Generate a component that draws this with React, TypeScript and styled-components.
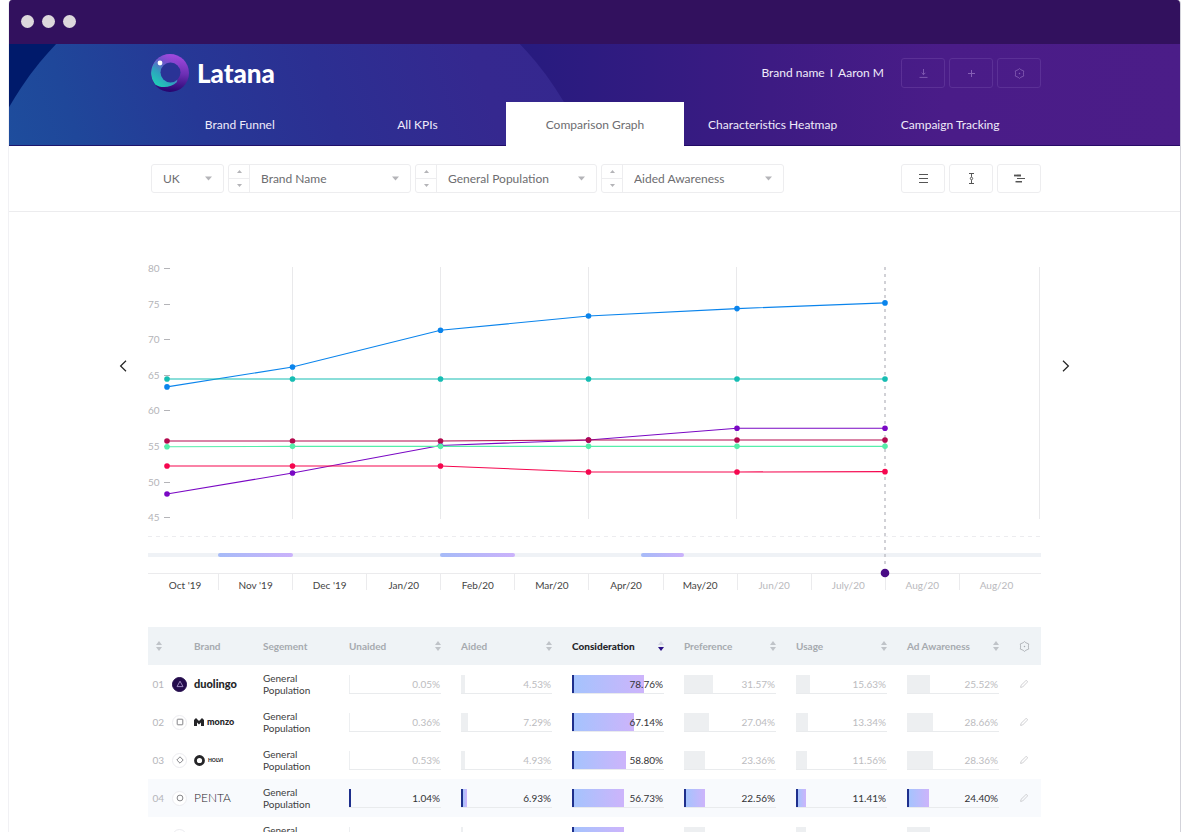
import React from "react";
import styled, { createGlobalStyle, css } from "styled-components";

const GlobalStyle = createGlobalStyle`
  *, *::before, *::after { box-sizing: border-box; }
  body {
    margin: 0;
    background: #fff;
    color: #3a3a3c;
    font-family: Lato, "Liberation Sans", sans-serif;
    font-size: 12px;
  }
  button, select { font: inherit; color: inherit; }
`;

const Window = styled.div`
  margin: 0 19px 0 8px;
  min-height: 100vh;
  border-left: 1px solid #f1f1f4;
  border-right: 1px solid #d3d3da;
  border-radius: 4px 4px 0 0;
  overflow: hidden;
  background: #fff;
`;

const TitleBar = styled.div`
  display: flex;
  align-items: center;
  gap: 8px;
  height: 44px;
  padding: 0 12px 2px;
  background: #32115e;
`;

const WindowDot = styled.span`
  width: 13px;
  height: 13px;
  border-radius: 50%;
  background: #dcd8dc;
`;

const Header = styled.header`
  position: relative;
  overflow: hidden;
  background: linear-gradient(90deg, #001a6b 0, #001a6b 5%, #281b7f 45%, #3d1b83 65%, #4a1c88 80%, #4b1d88 100%);

  &::before {
    content: "";
    position: absolute;
    left: -42px;
    top: -99px;
    width: 642px;
    height: 642px;
    border-radius: 50%;
    background: linear-gradient(72deg, #1d529f 0, #1f479a 18%, #263896 36%, #2c2f92 55%, #35288f 78%, #35278e 100%);
    background-size: 642px 202px;
    background-position: 0 44px;
    background-repeat: no-repeat;
  }

  &::after {
    content: "";
    position: absolute;
    left: 0;
    right: 0;
    bottom: 0;
    height: 1px;
    background: rgba(28, 4, 92, 0.75);
  }
`;

const Container = styled.div`
  position: relative;
  z-index: 1;
  width: 100%;
  max-width: 893px;
  margin: 0 auto;
`;

const Masthead = styled.div`
  display: flex;
  align-items: center;
  height: 58px;
  padding-left: 3px;
`;

const Brand = styled.a`
  display: flex;
  align-items: center;
  gap: 8px;
  color: #fff;
  font-size: 26px;
  font-weight: 900;
  line-height: 28px;
  text-decoration: none;
`;

const Account = styled.div`
  display: flex;
  gap: 5px;
  margin-left: auto;
  margin-right: 17px;
  color: #f0ebfa;
  line-height: 16px;
`;

const ButtonGroup = styled.div`
  display: flex;
  gap: 4px;
`;

const IconButton = styled.button<{ $dark?: boolean }>`
  display: flex;
  align-items: center;
  justify-content: center;
  width: 44px;
  height: ${(p) => (p.$dark ? 30 : 29)}px;
  padding: 0;
  border: 1px solid ${(p) => (p.$dark ? "#5b3096" : "#ededef")};
  border-radius: 3px;
  background: transparent;
  color: ${(p) => (p.$dark ? "#855fb5" : "#555")};
`;

const Tabs = styled.nav`
  display: grid;
  grid-template-columns: repeat(5, 1fr);
  padding: 0 2px 0 3px;
`;

const Tab = styled.a<{ $active?: boolean }>`
  display: flex;
  align-items: center;
  justify-content: center;
  height: 44px;
  color: ${(p) => (p.$active ? "#6d6d70" : "#f0ebfa")};
  background: ${(p) => (p.$active ? "#fff" : "transparent")};
  text-decoration: none;
  white-space: nowrap;
`;

const Toolbar = styled.div`
  border-bottom: 1px solid #ececee;
`;

const ToolbarRow = styled(Container)`
  display: flex;
  align-items: center;
  gap: 4px;
  height: 65px;
  padding-left: 3px;

  & > ${ButtonGroup} { margin-left: auto; }
`;

const Filter = styled.div<{ $width: number }>`
  display: flex;
  width: ${(p) => p.$width}px;
  height: 29px;
  border: 1px solid #ededef;
  border-radius: 3px;
`;

const Stepper = styled.div`
  display: flex;
  flex-direction: column;
  flex: none;
  width: 21px;
  border-right: 1px solid #ededef;
`;

const StepButton = styled.button`
  display: flex;
  flex: 1;
  align-items: center;
  justify-content: center;
  padding: 0;
  border: 0;
  background: none;
  color: #b4b4b8;

  & + & { border-top: 1px solid #ededef; }
`;

const SelectWrap = styled.label`
  position: relative;
  display: flex;
  flex: 1;
  align-items: center;
  color: #b4b4b8;

  svg { position: absolute; right: 11px; pointer-events: none; }
`;

const Select = styled.select`
  width: 100%;
  height: 100%;
  padding: 0 24px 1px 11px;
  border: 0;
  appearance: none;
  background: transparent;
  color: #6d6d70;
`;

const ChartRow = styled.section`
  display: flex;
  width: 100%;
  max-width: 951px;
  gap: 21px;
  margin: 0 auto;
  padding-top: 48px;
`;

const PageButton = styled.button`
  flex: none;
  align-self: flex-start;
  width: 8px;
  height: 14px;
  margin-top: 99px;
  padding: 0;
  border: 0;
  background: none;
  color: #222;
`;

const Chart = styled.div`
  flex: 1;
  min-width: 0;
`;

const Plot = styled.svg`
  display: block;
  position: relative;
  z-index: 1;
  width: 100%;
  height: auto;
  overflow: visible;
`;

const Months = styled.ol`
  display: grid;
  grid-template-columns: 70fr repeat(10, 74fr) 82fr;
  margin: -5px 0 0;
  padding: 0;
  list-style: none;
`;

const Month = styled.li<{ $future: boolean }>`
  height: 17px;
  padding-top: 5px;
  border-left: 1px solid #ebebed;
  color: ${(p) => (p.$future ? "#b9b9bd" : "#444")};
  font-size: 10px;
  line-height: 14px;
  text-align: center;

  &:first-child { padding-left: 3px; border-left-color: transparent; }
  &:last-child { padding-right: 8px; }
`;

const TableWrap = styled(Container)`
  margin-top: 37px;
`;

const Table = styled.table`
  width: 100%;
  table-layout: fixed;
  border-collapse: collapse;
  font-size: 10px;

  th, td { padding: 0; text-align: left; }
  th { height: 38px; background: #eff3f6; color: #a6aaaf; font-weight: 700; }
  td { height: 38px; }
`;

const HeadCell = styled.div<{ $sorted?: boolean }>`
  display: flex;
  align-items: center;
  justify-content: space-between;
  padding-right: 20px;
  color: ${(p) => (p.$sorted ? "#26262a" : "inherit")};
  font-weight: ${(p) => (p.$sorted ? 900 : 700)};
`;

const SortButton = styled.button`
  display: flex;
  padding: 0;
  border: 0;
  background: none;
`;

const RankHead = styled.div`
  display: flex;
  padding-left: 8px;
`;

const Row = styled.tr<{ $active?: boolean }>`
  background: ${(p) => (p.$active ? "#f8fafd" : "transparent")};
`;

const Rank = styled.div`
  display: flex;
  align-items: center;
  justify-content: flex-end;
  gap: 8px;
  padding-right: 7px;
  color: #b5b5ba;
`;

const Badge = styled.span<{ $filled?: boolean }>`
  display: flex;
  align-items: center;
  justify-content: center;
  width: 15px;
  height: 15px;
  border: 1px solid ${(p) => (p.$filled ? "#240c4c" : "#ececf0")};
  border-radius: 50%;
  background: ${(p) => (p.$filled ? "#240c4c" : "#fff")};
  color: ${(p) => (p.$filled ? "#a895c8" : "#77777c")};
`;

const BrandMark = styled.span<{ $size: number; $weight: number }>`
  display: flex;
  align-items: center;
  gap: 3px;
  color: #252528;
  font-size: ${(p) => p.$size}px;
  font-weight: ${(p) => p.$weight};
  line-height: 14px;
`;

const Segment = styled.div`
  width: 60px;
  color: #3d3d40;
  line-height: 12px;
`;

const Meter = styled.div<{ $on: boolean }>`
  display: flex;
  position: relative;
  height: 19px;
  margin-right: 20px;
  border-bottom: 1px solid #e9ebed;
  color: ${(p) => (p.$on ? "#333336" : "#bcbcc0")};
`;

const MeterBar = styled.span<{ $on: boolean }>`
  min-width: 1px;
  background: #edeff1;
  ${(p) =>
    p.$on &&
    css`
      min-width: 2px;
      border-left: 2px solid #1e2f8c;
      background: linear-gradient(90deg, #a5c3fd, #cdb4fb);
    `}
`;

const MeterValue = styled.span`
  position: absolute;
  right: 1px;
  top: 2px;
  line-height: 14px;
`;

const EditButton = styled.button`
  display: flex;
  margin-left: 1px;
  padding: 0;
  border: 0;
  background: none;
  color: #c4c4c8;
`;

const Caret = ({ up, size = 7 }: { up?: boolean; size?: number }) => (
  <svg width={size} height={size === 7 ? 5 : 3} viewBox="0 0 7 4" fill="currentColor" aria-hidden="true">
    <path d={up ? "M0 4 3.5 0 7 4z" : "M0 0h7L3.5 4z"} />
  </svg>
);

const SortIcon = ({ active }: { active?: boolean }) => (
  <svg width="6" height="10" viewBox="0 0 6 10" aria-hidden="true">
    <path d="M0 4 3 0l3 4z" fill={active ? "#d3d5e2" : "#bfc3c8"} />
    <path d="M0 6h6L3 10z" fill={active ? "#2a0f86" : "#bfc3c8"} />
  </svg>
);

const GearIcon = () => (
  <svg width="11" height="11" viewBox="0 0 12 12" fill="none" stroke="currentColor" aria-hidden="true">
    <path
      d="M6 .6 7.5 1.9 10.6 3.2 10.3 5.2 10.3 6.8 10.6 8.8 7.5 10.1 6 11.4 4.5 10.1 1.4 8.8 1.7 6.8 1.7 5.2 1.4 3.2 4.5 1.9z"
      strokeWidth=".9"
      strokeLinejoin="round"
    />
    <circle cx="6" cy="6" r=".8" fill="currentColor" stroke="none" />
  </svg>
);

const LogoIcon = () => (
  <svg width="38" height="38" viewBox="0 0 38 38" aria-hidden="true">
    <defs>
      <linearGradient id="ringPurple" x1=".6" y1="0" x2=".5" y2="1">
        <stop offset="0" stopColor="#a24be0" />
        <stop offset=".5" stopColor="#6c2fb4" />
        <stop offset="1" stopColor="#25036d" />
      </linearGradient>
      <linearGradient id="ringTeal" gradientUnits="userSpaceOnUse" x1="4" y1="30" x2="24" y2="4">
        <stop offset="0" stopColor="#1fcdb6" />
        <stop offset=".35" stopColor="#2fa0bf" />
        <stop offset=".7" stopColor="#6d55cb" stopOpacity=".9" />
        <stop offset="1" stopColor="#9a4bdc" stopOpacity="0" />
      </linearGradient>
    </defs>
    <circle cx="19" cy="19" r="19" fill="url(#ringPurple)" />
    <path d="M19 0A19 19 0 0 0 4 30.500C10 34.500 20 34 26 28L30 0z" fill="url(#ringTeal)" clipPath="circle(19px at 19px 19px)" />
    <circle cx="19.5" cy="18.5" r="10" fill="#2a3396" />
    <circle cx="9" cy="9" r="2.4" fill="#fff" />
  </svg>
);

const shapes: Record<string, React.ReactNode> = {
  triangle: <path d="M4 1.2 7 6.6H1z" />,
  square: <rect x="1.2" y="1.2" width="5.6" height="5.6" rx=".6" />,
  diamond: <path d="M4 .8 7.2 4 4 7.2.8 4z" />,
  circle: <circle cx="4" cy="4" r="2.9" />,
};

const ShapeIcon = ({ kind }: { kind: string }) => (
  <svg width="8" height="8" viewBox="0 0 8 8" fill="none" stroke="currentColor" strokeWidth=".9" strokeLinejoin="round" aria-hidden="true">
    {shapes[kind]}
  </svg>
);

const tabs = ["Brand Funnel", "All KPIs", "Comparison Graph", "Characteristics Heatmap", "Campaign Tracking"];

const filters = [
  { label: "Country", value: "UK", width: 73 },
  { label: "Brand", value: "Brand Name", width: 183, stepper: true },
  { label: "Segment", value: "General Population", width: 182, stepper: true },
  { label: "KPI", value: "Aided Awareness", width: 183, stepper: true },
];

const months = ["Oct '19", "Nov '19", "Dec '19", "Jan/20", "Feb/20", "Mar/20", "Apr/20", "May/20", "Jun/20", "July/20", "Aug/20", "Aug/20"];

const pointX = [19, 144.5, 292.5, 440.5, 589, 737];
const valueY = (v: number) => 8 + (80 - v) * 7.12;

const series = [
  { color: "#7a08c4", values: [48.26, 51.2, 55.07, 55.85, 57.5, 57.5] },
  { color: "#f5074f", values: [52.2, 52.2, 52.2, 51.35, 51.35, 51.4] },
  { color: "#b30a4e", values: [55.7, 55.7, 55.7, 55.85, 55.85, 55.85] },
  { color: "#56eeaa", values: [54.9, 54.95, 54.95, 54.95, 54.95, 54.95] },
  { color: "#0a84ec", values: [63.3, 66.1, 71.25, 73.26, 74.3, 75.1] },
  { color: "#16bdb3", values: [64.4, 64.4, 64.4, 64.4, 64.4, 64.4] },
];

const campaigns = [
  { x: 70, width: 75 },
  { x: 292, width: 75 },
  { x: 493, width: 43 },
];

const metrics = ["Unaided", "Aided", "Consideration", "Preference", "Usage", "Ad Awareness"];
const columnWidths = [46, 69, 86, 112, 111, 112, 112, 111, 112];
const sortedMetric = 2;

const MonzoLogo = () => (
  <BrandMark $size={9} $weight={900}>
    <svg width="10" height="8" viewBox="0 0 10 8" fill="currentColor" aria-hidden="true">
      <path d="M0 2 2 0l3 3 3-3 2 2v6H7V4.6L5 6.6 3 4.6V8H0z" />
    </svg>
    monzo
  </BrandMark>
);

const HolviLogo = () => (
  <BrandMark $size={5} $weight={900}>
    <svg width="11" height="11" viewBox="0 0 11 11" fill="none" stroke="currentColor" strokeWidth="2.8" aria-hidden="true">
      <circle cx="5.5" cy="5.500" r="4" />
    </svg>
    HOLVI
  </BrandMark>
);

const brands = [
  { shape: "triangle", filled: true, logo: <BrandMark $size={11} $weight={900}>duolingo</BrandMark>, values: [0.05, 4.53, 78.76, 31.57, 15.63, 25.52] },
  { shape: "square", logo: <MonzoLogo />, values: [0.36, 7.29, 67.14, 27.04, 13.34, 28.66] },
  { shape: "diamond", logo: <HolviLogo />, values: [0.53, 4.93, 58.8, 23.36, 11.56, 28.36] },
  { shape: "circle", active: true, logo: <BrandMark $size={12} $weight={300}>PENTA</BrandMark>, values: [1.04, 6.93, 56.73, 22.56, 11.41, 24.4] },
  { shape: "circle", logo: <BrandMark $size={11} $weight={900}>N26</BrandMark>, values: [0.31, 2.1, 56.4, 22.4, 10.9, 24.6] },
];

const ComparisonPlot = () => (
  <Plot viewBox="0 0 893 318" role="img" aria-label="Aided awareness by month">
    <defs>
      <linearGradient id="campaign">
        <stop offset="0" stopColor="#a6bbf8" />
        <stop offset="1" stopColor="#cbb2fb" />
      </linearGradient>
    </defs>
    {[144.5, 292.5, 440.5, 588.5, 891.5].map((x) => (
      <line key={x} x1={x} x2={x} y1="7" y2="259" stroke="#e9e9eb" />
    ))}
    {[80, 75, 70, 65, 60, 55, 50, 45].map((v) => (
      <g key={v}>
        <text x="0" y={Math.round(valueY(v)) + 4} fontSize="10" fill="#b4b4b8">{v}</text>
        <line x1="16" x2="22" y1={Math.round(valueY(v)) + 0.5} y2={Math.round(valueY(v)) + 0.5} stroke="#b4b4b8" />
      </g>
    ))}
    <line x1="0" x2="893" y1="276.5" y2="276.5" stroke="#ececef" strokeDasharray="4 4" />
    <rect x="0" y="293" width="893" height="4" fill="#eff2f6" />
    {campaigns.map((c) => (
      <rect key={c.x} x={c.x} y="293" width={c.width} height="4" rx="2" fill="url(#campaign)" />
    ))}
    <line x1="0" x2="893" y1="313.5" y2="313.5" stroke="#ebebed" />
    <line x1="737" x2="737" y1="7" y2="308" stroke="#b9b9c0" strokeWidth="1.3" strokeDasharray="3 4" />
    {series.map((s) => (
      <g key={s.color} fill={s.color}>
        <polyline
          points={s.values.map((v, i) => `${pointX[i]},${valueY(v)}`).join(" ")}
          fill="none"
          stroke={s.color}
          strokeWidth="1.1"
        />
        {s.values.map((v, i) => (
          <circle key={i} cx={pointX[i]} cy={valueY(v)} r="2.8" />
        ))}
      </g>
    ))}
    <circle cx="737" cy="313" r="4.3" fill="#4a0c86" />
  </Plot>
);

export default function App() {
  return (
    <>
      <GlobalStyle />
      <Window>
        <TitleBar>
          <WindowDot />
          <WindowDot />
          <WindowDot />
        </TitleBar>

        <Header>
          <Container>
            <Masthead>
              <Brand href="#">
                <LogoIcon />
                Latana
              </Brand>
              <Account>
                <span>Brand name</span>
                <span>I</span>
                <span>Aaron M</span>
              </Account>
              <ButtonGroup>
                <IconButton $dark aria-label="Download">
                  <svg width="9" height="9" viewBox="0 0 9 9" fill="none" stroke="currentColor" strokeWidth=".9">
                    <path d="M4.5 0v5.6M2.6 3.8l1.9 1.9 1.9-1.9M.5 8.4h8" />
                  </svg>
                </IconButton>
                <IconButton $dark aria-label="Add">
                  <svg width="7" height="7" viewBox="0 0 7 7" fill="none" stroke="currentColor">
                    <path d="M3.5 0v7M0 3.5h7" />
                  </svg>
                </IconButton>
                <IconButton $dark aria-label="Settings">
                  <GearIcon />
                </IconButton>
              </ButtonGroup>
            </Masthead>
            <Tabs>
              {tabs.map((tab) => (
                <Tab key={tab} href="#" $active={tab === "Comparison Graph"}>
                  {tab}
                </Tab>
              ))}
            </Tabs>
          </Container>
        </Header>

        <Toolbar>
          <ToolbarRow>
            {filters.map((f) => (
              <Filter key={f.label} $width={f.width}>
                {f.stepper && (
                  <Stepper>
                    <StepButton aria-label={`Previous ${f.label}`}>
                      <Caret up size={5} />
                    </StepButton>
                    <StepButton aria-label={`Next ${f.label}`}>
                      <Caret size={5} />
                    </StepButton>
                  </Stepper>
                )}
                <SelectWrap>
                  <Select aria-label={f.label}>
                    <option>{f.value}</option>
                  </Select>
                  <Caret />
                </SelectWrap>
              </Filter>
            ))}
            <ButtonGroup>
              <IconButton aria-label="List view">
                <svg width="9" height="11" viewBox="0 0 9 11" stroke="currentColor">
                  <path d="M0 1.5h9M0 5.5h9M0 9.5h9" />
                </svg>
              </IconButton>
              <IconButton aria-label="Confidence interval">
                <svg width="5" height="11" viewBox="0 0 5 11" fill="none" stroke="currentColor">
                  <path d="M0 .5h5M0 10.5h5M2.5 .5v3.4M2.5 7.1v3.4" />
                  <circle cx="2.5" cy="5.5" r="1.2" />
                </svg>
              </IconButton>
              <IconButton aria-label="Timeline view">
                <svg width="11" height="9" viewBox="0 0 11 9" stroke="currentColor">
                  <path d="M0 1.5h7" strokeWidth="1.8" />
                  <path d="M3 4.5h8" strokeWidth="1.2" />
                  <path d="M1.5 7.7h6.5" strokeWidth="1.5" />
                </svg>
              </IconButton>
            </ButtonGroup>
          </ToolbarRow>
        </Toolbar>

        <ChartRow>
          <PageButton aria-label="Earlier">
            <svg width="8" height="14" viewBox="0 0 8 14" fill="none" stroke="currentColor" strokeWidth="1.2">
              <path d="M7 1.8 1.6 7 7 12.2" />
            </svg>
          </PageButton>
          <Chart>
            <ComparisonPlot />
            <Months>
              {months.map((m, i) => (
                <Month key={i} $future={i > 7}>
                  {m}
                </Month>
              ))}
            </Months>
          </Chart>
          <PageButton aria-label="Later">
            <svg width="8" height="14" viewBox="0 0 8 14" fill="none" stroke="currentColor" strokeWidth="1.2">
              <path d="M1 1.8 6.4 7 1 12.2" />
            </svg>
          </PageButton>
        </ChartRow>

        <TableWrap>
          <Table>
            <colgroup>
              {columnWidths.map((w, i) => (
                <col key={i} width={w} />
              ))}
              <col />
            </colgroup>
            <thead>
              <tr>
                <th>
                  <RankHead>
                    <SortButton aria-label="Sort by rank">
                      <SortIcon />
                    </SortButton>
                  </RankHead>
                </th>
                <th>Brand</th>
                <th>Segement</th>
                {metrics.map((m, i) => (
                  <th key={m}>
                    <HeadCell $sorted={i === sortedMetric}>
                      {m}
                      <SortButton aria-label={`Sort by ${m}`}>
                        <SortIcon active={i === sortedMetric} />
                      </SortButton>
                    </HeadCell>
                  </th>
                ))}
                <th>
                  <SortButton aria-label="Table settings">
                    <GearIcon />
                  </SortButton>
                </th>
              </tr>
            </thead>
            <tbody>
              {brands.map((b, row) => (
                <Row key={row} $active={b.active}>
                  <td>
                    <Rank>
                      {`0${row + 1}`}
                      <Badge $filled={b.filled}>
                        <ShapeIcon kind={b.shape} />
                      </Badge>
                    </Rank>
                  </td>
                  <td>{b.logo}</td>
                  <td>
                    <Segment>General Population</Segment>
                  </td>
                  {b.values.map((v, i) => {
                    const on = Boolean(b.active) || i === sortedMetric;
                    return (
                      <td key={i}>
                        <Meter $on={on}>
                          <MeterBar $on={on} style={{ width: `${v}%` }} />
                          <MeterValue>{v.toFixed(2)}%</MeterValue>
                        </Meter>
                      </td>
                    );
                  })}
                  <td>
                    <EditButton aria-label="Edit row">
                      <svg width="8" height="8" viewBox="0 0 8 8" fill="none" stroke="currentColor" strokeWidth=".8" strokeLinejoin="round">
                        <path d="M.6 7.4 1 5.4 5.6.9a1 1 0 0 1 1.5 1.5L2.6 7z" />
                      </svg>
                    </EditButton>
                  </td>
                </Row>
              ))}
            </tbody>
          </Table>
        </TableWrap>
      </Window>
    </>
  );
}
